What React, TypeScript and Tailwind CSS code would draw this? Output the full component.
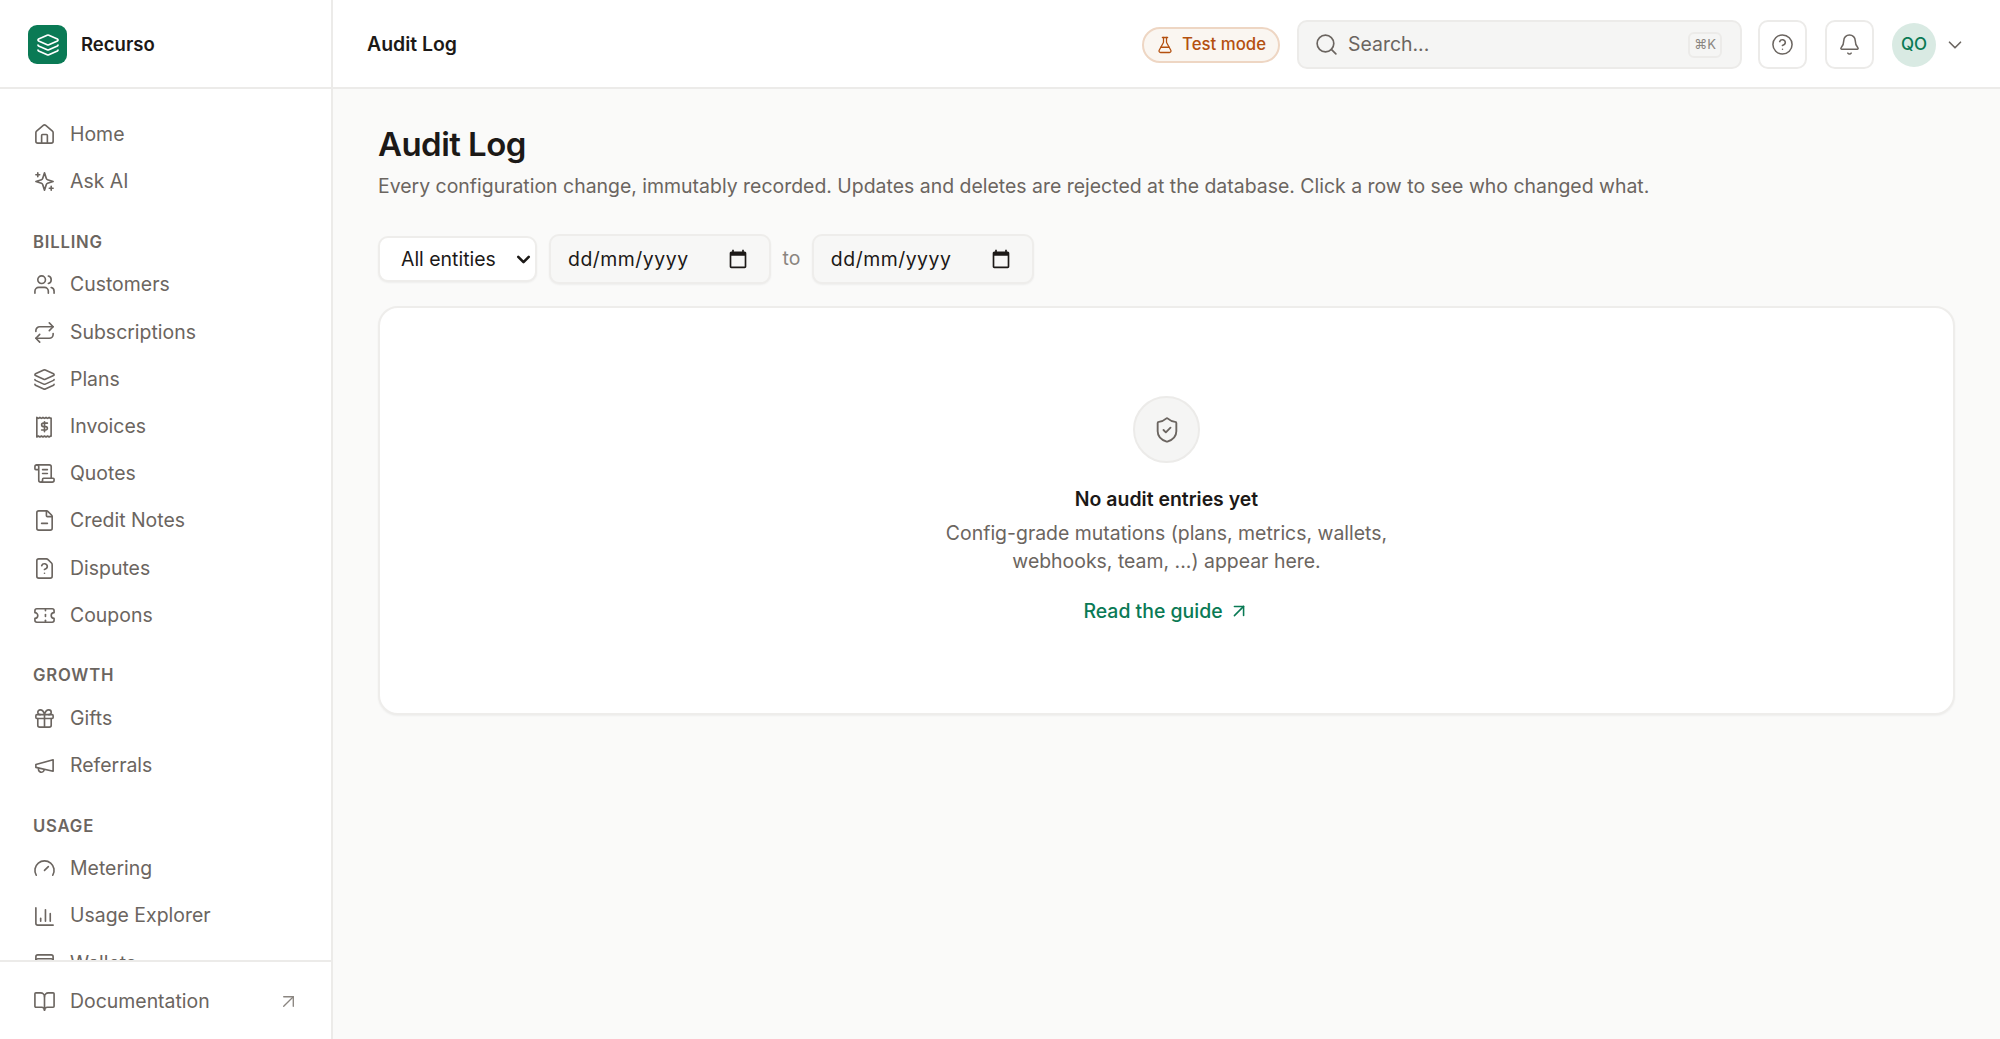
import {
  ArrowUpRight,
  Bell,
  BookOpen,
  ChartColumn,
  ChevronDown,
  CircleHelp,
  FileMinus,
  FileQuestion,
  FlaskConical,
  Gauge,
  Gift,
  House,
  Layers,
  Repeat,
  ScrollText,
  Search,
  ShieldCheck,
  Ticket,
  Users,
  WalletCards,
} from 'lucide-react';
import type { ComponentType, ReactNode } from 'react';

type IconProps = { size?: number; strokeWidth?: number; className?: string };
type IconType = ComponentType<IconProps>;

function Outline({ size = 23, strokeWidth = 1.7, className, children }: IconProps & { children: ReactNode }) {
  return (
    <svg width={size} height={size} viewBox="0 0 24 24" fill="none" stroke="currentColor" strokeWidth={strokeWidth} strokeLinecap="round" strokeLinejoin="round" className={className}>
      {children}
    </svg>
  );
}

function InvoiceIcon(props: IconProps) {
  return (
    <Outline {...props}>
      <path d="M4 2.5l1.6 1 1.6-1 1.6 1 1.6-1 1.6 1 1.6-1 1.6 1 1.6-1 1.6 1 .5-.3v19l-.5-.3-1.6 1-1.6-1-1.6 1-1.6-1-1.6 1-1.6-1-1.6 1-1.6-1-1.6 1z" />
      <path d="M15 8.5h-4.2a1.8 1.8 0 0 0 0 3.6h2.4a1.8 1.8 0 0 1 0 3.6H9" />
      <path d="M12 7v10.5" />
    </Outline>
  );
}

function AiIcon(props: IconProps) {
  return (
    <Outline {...props}>
      <path d="m12 3-1.912 5.813a2 2 0 0 1-1.275 1.275L3 12l5.813 1.912a2 2 0 0 1 1.275 1.275L12 21l1.912-5.813a2 2 0 0 1 1.275-1.275L21 12l-5.813-1.912a2 2 0 0 1-1.275-1.275L12 3Z" />
      <path d="M5 3v4M19 17v4M3 5h4M17 19h4" />
    </Outline>
  );
}

function ReferralIcon(props: IconProps) {
  return (
    <Outline {...props}>
      <path d="m3 11 18-5v12L3 14v-3z" />
      <path d="M11.6 16.8a3 3 0 1 1-5.8-1.6" />
    </Outline>
  );
}

const TOP: [string, IconType][] = [
  ['Home', House],
  ['Ask AI', AiIcon],
];

const SECTIONS: { label: string; items: [string, IconType][] }[] = [
  {
    label: 'BILLING',
    items: [
      ['Customers', Users],
      ['Subscriptions', Repeat],
      ['Plans', Layers],
      ['Invoices', InvoiceIcon],
      ['Quotes', ScrollText],
      ['Credit Notes', FileMinus],
      ['Disputes', FileQuestion],
      ['Coupons', Ticket],
    ],
  },
  {
    label: 'GROWTH',
    items: [
      ['Gifts', Gift],
      ['Referrals', ReferralIcon],
    ],
  },
  {
    label: 'USAGE',
    items: [
      ['Metering', Gauge],
      ['Usage Explorer', ChartColumn],
      ['Wallets', WalletCards],
    ],
  },
];

function NavRow({ label, Icon }: { label: string; Icon: IconType }) {
  return (
    <a className="flex h-[47.2px] shrink-0 items-center gap-[14px] px-[33px] text-[19.45px] text-[#6b6560]">
      <Icon size={23} strokeWidth={1.7} className="shrink-0" />
      <span>{label}</span>
    </a>
  );
}

function DateField() {
  return (
    <div className="flex h-[50px] w-[222px] items-center justify-between rounded-[10px] border-2 border-[#eeedeb] bg-[#f7f7f6] pr-[21px] pl-[17px] text-[19.45px] tracking-[0.5px] text-[#1c1917] shadow-[0_1px_2px_rgba(0,0,0,0.05)]">
      <span className="pt-[2px]">dd/mm/yyyy</span>
      <svg width={20} height={20} viewBox="0 0 24 24" fill="currentColor">
        <path d="M20 3h-1V1h-2v2H7V1H5v2H4c-1.1 0-2 .9-2 2v16c0 1.1.9 2 2 2h16c1.1 0 2-.9 2-2V5c0-1.1-.9-2-2-2zm0 18H4V8h16v13z" />
      </svg>
    </div>
  );
}

export default function App() {
  return (
    <div className="flex h-screen overflow-hidden bg-[#fafaf9] font-['Inter',sans-serif]">
      <aside className="flex w-[333px] shrink-0 flex-col border-r-2 border-[#ecebe9] bg-white">
        <div className="flex h-[89px] shrink-0 items-center gap-[14px] border-b-2 border-[#ecebe9] pt-[2px] pl-[28px]">
          <span className="flex h-[39px] w-[39px] items-center justify-center rounded-[9px] bg-[#0a7a55] text-white">
            <Layers size={24} strokeWidth={1.7} />
          </span>
          <span className="text-[18.5px] font-semibold text-[#1c1917]">Recurso</span>
        </div>

        <nav className="flex min-h-0 flex-1 flex-col overflow-hidden pt-[22px]">
          {TOP.map(([label, Icon]) => (
            <NavRow key={label} label={label} Icon={Icon} />
          ))}
          {SECTIONS.map((section) => (
            <div key={section.label} className="shrink-0">
              <div className="mt-[25px] mb-[7px] flex h-[24px] items-center px-[33px] text-[16.7px] font-semibold tracking-[0.8px] text-[#6b6560]">
                {section.label}
              </div>
              {section.items.map(([label, Icon]) => (
                <NavRow key={label} label={label} Icon={Icon} />
              ))}
            </div>
          ))}
        </nav>

        <div className="flex h-[79px] shrink-0 items-center gap-[14px] border-t-2 border-[#ecebe9] pt-[2px] pr-[31px] pl-[33px] text-[19.45px] text-[#6b6560]">
          <BookOpen size={23} strokeWidth={1.7} />
          <span className="flex-1">Documentation</span>
          <ArrowUpRight size={23} strokeWidth={1.4} className="text-[#8a8580]" />
        </div>
      </aside>

      <div className="flex min-w-0 flex-1 flex-col">
        <header className="flex h-[89px] shrink-0 items-center border-b-2 border-[#ecebe9] bg-white pt-[2px] pr-[34px] pl-[34px]">
          <h1 className="text-[19.45px] font-semibold text-[#1c1917]">Audit Log</h1>
          <div className="ml-auto flex h-[36px] w-[138px] items-center justify-center gap-[8px] rounded-full border-2 border-[#eed6c3] bg-[#faf6f1] text-[16.8px] font-medium text-[#b4500f]">
            <FlaskConical size={18} strokeWidth={1.7} />
            Test mode
          </div>
          <div className="ml-[17px] flex h-[49px] w-[445px] items-center gap-[9px] rounded-[10px] border-2 border-[#ecebe9] bg-[#f5f5f4] pr-[18px] pl-[15px] text-[19.45px] text-[#6b6560]">
            <Search size={25} strokeWidth={1.6} />
            <span className="flex-1">Search...</span>
            <kbd className="flex h-[26px] w-[34px] items-center justify-center rounded-[6px] border-2 border-[#ecebe9] bg-[#f5f5f4] font-['Inter',sans-serif] text-[13px] text-[#8a8580]">⌘K</kbd>
          </div>
          <button className="ml-[16px] flex h-[49px] w-[49px] items-center justify-center rounded-[10px] border-2 border-[#ecebe9] bg-white text-[#6b6560]">
            <CircleHelp size={23} strokeWidth={1.6} />
          </button>
          <button className="ml-[18px] flex h-[49px] w-[49px] items-center justify-center rounded-[10px] border-2 border-[#ecebe9] bg-white text-[#6b6560]">
            <Bell size={23} strokeWidth={1.6} />
          </button>
          <span className="ml-[18px] flex h-[44px] w-[44px] items-center justify-center rounded-full bg-[#d9eae3] text-[17px] font-medium text-[#0a7a55]">QO</span>
          <ChevronDown size={22} strokeWidth={1.8} className="ml-[8px] text-[#6b6560]" />
        </header>

        <main className="min-h-0 flex-1 pt-[35px] pr-[45px] pl-[45px]">
          <h2 className="text-[33px] leading-[40px] font-semibold tracking-[-0.55px] text-[#1c1917]">Audit Log</h2>
          <p className="mt-[7px] text-[19.45px] leading-[30px] text-[#6b6560]">
            Every configuration change, immutably recorded. Updates and deletes are rejected at the database. Click a row to see who changed what.
          </p>
          <div className="mt-[33px] flex items-center">
            <div className="relative">
              <select className="h-[46px] w-[159px] appearance-none rounded-[10px] border-2 border-[#eeedeb] bg-white pt-[2px] pl-[21px] text-[19.45px] text-[#1c1917] shadow-[0_1px_2px_rgba(0,0,0,0.05)]">
                <option>All entities</option>
              </select>
              <ChevronDown size={21} strokeWidth={3} className="pointer-events-none absolute top-[13px] right-[3px] text-[#1c1917]" />
            </div>
            <div className="ml-[12px]">
              <DateField />
            </div>
            <span className="mx-[11.5px] text-[19.45px] text-[#8a8580]">to</span>
            <DateField />
          </div>
          <section className="mt-[22px] flex h-[409px] flex-col items-center rounded-[20px] border-2 border-[#eeedeb] bg-white pt-[88px] shadow-[0_1px_2px_rgba(0,0,0,0.05)]">
            <span className="flex h-[67px] w-[67px] items-center justify-center rounded-full border-2 border-[#ecebe9] bg-[#f5f5f4] text-[#6b6560]">
              <ShieldCheck size={28} strokeWidth={1.6} />
            </span>
            <h3 className="mt-[22px] text-[19.45px] leading-[28px] font-semibold text-[#1c1917]">No audit entries yet</h3>
            <p className="mt-[6px] w-[480px] text-center text-[19.45px] leading-[28px] text-[#6b6560]">
              Config-grade mutations (plans, metrics, wallets, webhooks, team, ...) appear here.
            </p>
            <a className="mt-[22px] flex items-center gap-[5px] text-[19.45px] leading-[28px] font-medium text-[#0a7a55]">
              Read the guide
              <ArrowUpRight size={22} strokeWidth={1.7} />
            </a>
          </section>
        </main>
      </div>
    </div>
  );
}
